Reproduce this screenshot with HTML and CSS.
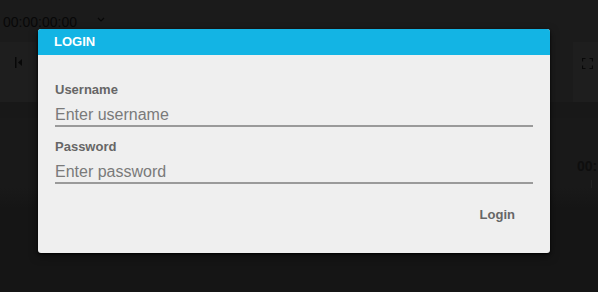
FILE: index.html
```html
<!DOCTYPE html>
<html lang="en">
<head>
    <meta charset="UTF-8">
    <meta name="viewport" content="width=device-width, initial-scale=1.0">
    <title>Login</title>
    <link rel="stylesheet" href="styles.css">
</head>
<body>
    <div class="app">
        <div class="toolbar">
            <span class="timecode">00:00:00:00</span>
            <svg class="chevron" width="8" height="5" viewBox="0 0 8 5">
                <path d="M1 1 L4 4 L7 1" fill="none" stroke="currentColor" stroke-width="1.2"/>
            </svg>
        </div>

        <div class="track-row">
            <div class="side-panel left">
                <svg width="8" height="11" viewBox="0 0 8 11">
                    <rect x="0" y="0" width="1.5" height="11" fill="currentColor"/>
                    <path d="M7 2 L3 5.5 L7 9 Z" fill="currentColor"/>
                </svg>
            </div>
            <div class="track-body"></div>
            <div class="side-panel right">
                <svg width="11" height="11" viewBox="0 0 11 11">
                    <path d="M0.5 3.5 V0.5 H3.5 M7.5 0.5 H10.5 V3.5 M10.5 7.5 V10.5 H7.5 M3.5 10.5 H0.5 V7.5" fill="none" stroke="currentColor" stroke-width="1.2"/>
                </svg>
            </div>
        </div>

        <div class="timeline">
            <span class="timeline-time">00:</span>
            <span class="timeline-tick"></span>
        </div>
    </div>

    <!-- Modal -->
    <div class="overlay">
        <div class="dialog">
            <div class="dialog-header">LOGIN</div>
            <div class="dialog-body">
                <div class="field">
                    <label class="field-label" for="username">Username</label>
                    <input class="field-input" id="username" type="text" placeholder="Enter username">
                </div>
                <div class="field">
                    <label class="field-label" for="password">Password</label>
                    <input class="field-input" id="password" type="password" placeholder="Enter password">
                </div>
                <div class="dialog-actions">
                    <button class="btn-flat">Login</button>
                </div>
            </div>
        </div>
    </div>
</body>
</html>
```

FILE: styles.css
```css
:root {
    --color-accent: #13b4e4;
    --color-dialog: #efefef;
    --color-label: #666666;
    --color-placeholder: #7a7a7a;
    --color-rule: #9a9a9a;
    --color-app-top: #1b1b1b;
    --color-app-panel: #1e1e1e;
    --color-app-low: #151515;
    --color-app-ink: #080808;
}

* {
    margin: 0;
    padding: 0;
    box-sizing: border-box;
}

html, body {
    height: 100%;
}

body {
    font-family: "Liberation Sans", Arial, sans-serif;
    background-color: var(--color-app-low);
    overflow: hidden;
    position: relative;
}

/* background app */

.app {
    height: 100%;
    display: flex;
    flex-direction: column;
}

.toolbar {
    height: 42px;
    background: var(--color-app-top);
    display: flex;
    align-items: center;
    padding: 0 0 0 3px;
    gap: 20px;
    color: var(--color-app-ink);
}

.timecode {
    font-size: 14px;
    line-height: 16px;
    margin-top: 1px;
}

.chevron {
    margin-top: -3px;
}

.track-row {
    height: 60px;
    display: flex;
    background: var(--color-app-top);
}

.side-panel {
    background: var(--color-app-panel);
    color: var(--color-app-ink);
    display: flex;
    justify-content: center;
    padding-top: 15px;
}

.side-panel.left {
    width: 36px;
    padding-left: 2px;
}

.side-panel.right {
    width: 25px;
    margin-left: auto;
    padding-top: 16px;
    padding-left: 3px;
}

.track-body {
    flex: 1;
}

.timeline {
    flex: 1;
    border-top: 16px solid #181818;
    border-bottom: none;
    background: linear-gradient(to bottom, #191919 0, #191919 70px, var(--color-app-low) 90px);
    position: relative;
    display: flex;
    flex-direction: column;
    align-items: flex-end;
    padding-top: 40px;
}

.timeline-time {
    font-size: 14px;
    font-weight: bold;
    color: #0e0e0e;
    width: 21px;
    overflow: hidden;
    white-space: nowrap;
}

.timeline-tick {
    width: 1px;
    height: 8px;
    background: #222;
    margin: 6px 6px 0 0;
}

/* modal */

.overlay {
    position: absolute;
    inset: 0;
    padding: 29px 0 0 38px;
}

.dialog {
    width: 512px;
    height: 224px;
    background: var(--color-dialog);
    border-radius: 3px;
    overflow: hidden;
    box-shadow: 0 1px 2px rgba(0, 0, 0, 0.9), 0 3px 8px rgba(0, 0, 0, 0.5);
    display: flex;
    flex-direction: column;
}

.dialog-header {
    height: 26px;
    background: var(--color-accent);
    color: #ffffff;
    font-size: 13px;
    font-weight: bold;
    line-height: 26px;
    padding-left: 16px;
}

.dialog-body {
    flex: 1;
    padding: 27px 17px 0 17px;
    display: flex;
    flex-direction: column;
    gap: 12px;
}

.field {
    display: flex;
    flex-direction: column;
    gap: 7px;
}

.field-label {
    font-size: 13px;
    line-height: 15px;
    font-weight: bold;
    color: var(--color-label);
}

.field-input {
    font-family: inherit;
    font-size: 16px;
    line-height: 19px;
    height: 23px;
    padding: 0;
    border: none;
    border-bottom: 2px solid var(--color-rule);
    background: transparent;
    color: #333;
    outline: none;
}

.field-input::placeholder {
    color: var(--color-placeholder);
}

.dialog-actions {
    display: flex;
    justify-content: flex-end;
    margin-top: 3px;
}

.btn-flat {
    font-family: inherit;
    font-size: 13px;
    font-weight: bold;
    line-height: 15px;
    color: var(--color-label);
    background: none;
    border: none;
    padding: 8px 18px;
    cursor: pointer;
}
```
